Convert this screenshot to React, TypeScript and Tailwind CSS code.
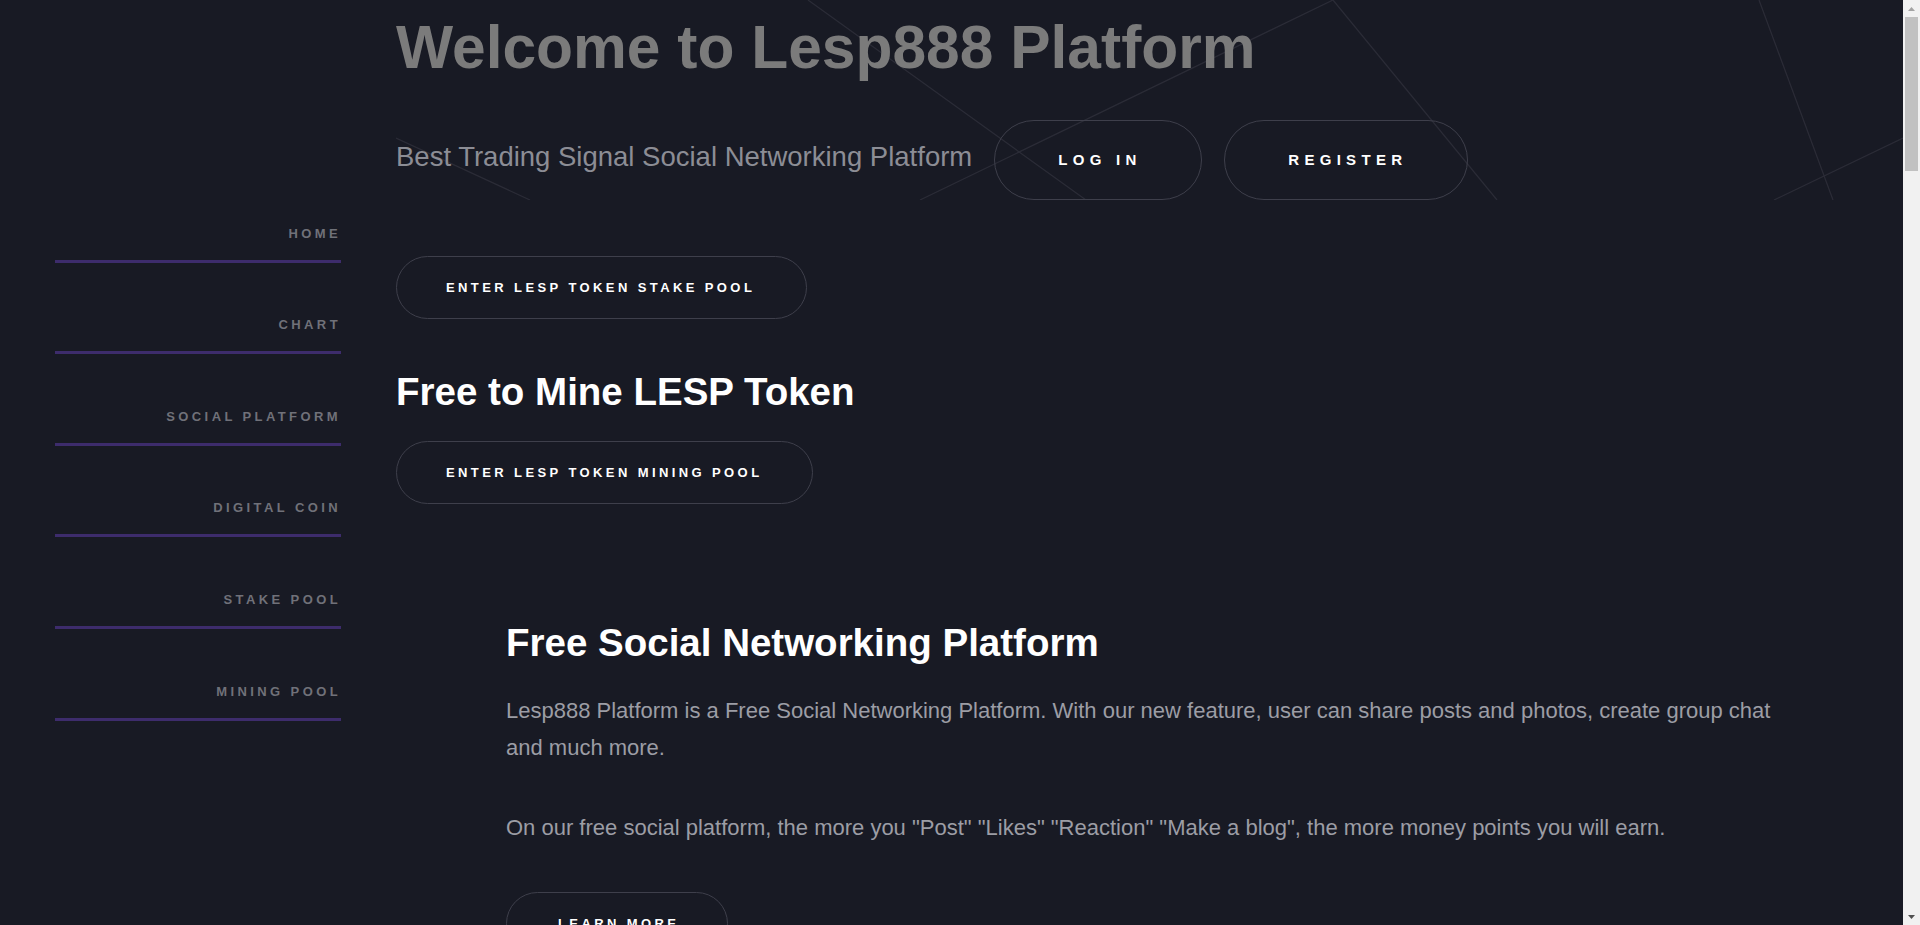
import React from "react";

const navItems = ["HOME", "CHART", "SOCIAL PLATFORM", "DIGITAL COIN", "STAKE POOL", "MINING POOL"];

function HeaderLines() {
  return (
    <svg
      className="pointer-events-none absolute left-0 top-0"
      width="1507"
      height="200"
      viewBox="0 0 1507 200"
    >
      <g stroke="#2b2c37" strokeWidth="1.2" fill="none">
        <line x1="0" y1="138" x2="134" y2="200" />
        <line x1="412" y1="0" x2="690" y2="200" />
        <line x1="524" y1="200" x2="937" y2="0" />
        <line x1="937" y1="0" x2="1101" y2="200" />
        <line x1="1363" y1="0" x2="1437" y2="200" />
        <line x1="1378" y1="200" x2="1507" y2="138" />
      </g>
    </svg>
  );
}

function FakeScrollbar() {
  return (
    <div className="fixed right-0 top-0 flex h-screen w-[17px] flex-col bg-[#f1f1f1]">
      <div className="flex h-[17px] items-center justify-center">
        <svg width="9" height="6" viewBox="0 0 9 6">
          <polygon points="4.5,1 8,5 1,5" fill="#a3a3a3" />
        </svg>
      </div>
      <div className="mx-[2px] h-[154px] bg-[#c1c1c1]" />
      <div className="flex-1" />
      <div className="flex h-[17px] items-center justify-center">
        <svg width="9" height="6" viewBox="0 0 9 6">
          <polygon points="1,1 8,1 4.5,5" fill="#505050" />
        </svg>
      </div>
    </div>
  );
}

export default function App() {
  return (
    <div className="min-h-[1400px] w-full bg-[#181a24] pr-[17px] font-['Liberation_Sans',Arial,sans-serif]">
      <div className="flex">
        {/* Sidebar */}
        <aside className="w-[396px] shrink-0 px-[55px] pt-[171px]">
          <ul className="flex flex-col">
            {navItems.map((item) => (
              <li
                key={item}
                className="flex h-[91.6px] items-end justify-end border-b-[3px] border-[#3d2c6c] pb-[16px]"
              >
                <span className="text-[13px] font-bold leading-[20px] tracking-[3.4px] text-[#707179]">
                  {item}
                </span>
              </li>
            ))}
          </ul>
        </aside>

        {/* Main */}
        <main className="min-w-0 flex-1">
          <header className="relative h-[200px] overflow-hidden">
            <HeaderLines />
            <div className="relative">
              <h1 className="pt-[11px] text-[60.5px] font-bold leading-[72px] text-[#7b7b7b]">
                Welcome to Lesp888 Platform
              </h1>
              <div className="mt-[37px] flex items-center gap-[22px]">
                <p className="mb-[8px] text-[27.5px] leading-[31px] text-[#8c8d95]">
                  Best Trading Signal Social Networking Platform
                </p>
                <button className="flex h-[80px] w-[208px] shrink-0 items-center rounded-full border border-[#3e3f4b] pl-[63px] text-[15px] font-bold tracking-[5.3px] text-white">
                  LOG IN
                </button>
                <button className="flex h-[80px] w-[244px] shrink-0 items-center rounded-full border border-[#3e3f4b] pl-[63px] text-[15px] font-bold tracking-[5.3px] text-white">
                  REGISTER
                </button>
              </div>
            </div>
          </header>

          <div className="mt-[56px] flex flex-col items-start">
            <button className="flex h-[63px] w-[411px] items-center rounded-full border border-[#3e3f4b] pl-[49px] text-[13px] font-bold tracking-[3.4px] text-white">
              ENTER LESP TOKEN STAKE POOL
            </button>
            <h2 className="mt-[50.4px] text-[38.5px] font-bold leading-[45.6px] text-white">
              Free to Mine LESP Token
            </h2>
            <button className="mt-[26px] flex h-[63px] w-[417px] items-center rounded-full border border-[#3e3f4b] pl-[49px] text-[13px] font-bold tracking-[3.4px] text-white">
              ENTER LESP TOKEN MINING POOL
            </button>
          </div>

          <section className="mt-[116px] w-[1390px] pl-[110px]">
            <h3 className="text-[38.5px] font-bold leading-[45.6px] text-white">
              Free Social Networking Platform
            </h3>
            <p className="mt-[26px] text-[22px] leading-[37px] text-[#9c9da5]">
              Lesp888 Platform is a Free Social Networking Platform. With our new feature, user can share posts and photos, create group chat and much more.
            </p>
            <p className="mt-[43.6px] text-[22px] leading-[37px] text-[#9c9da5]">
              On our free social platform, the more you "Post" "Likes" "Reaction" "Make a blog", the more money points you will earn.
            </p>
            <button className="mt-[46px] flex h-[63px] w-[222px] items-center rounded-full border border-[#3e3f4b] pl-[51px] text-[13px] font-bold tracking-[3.4px] text-white">
              LEARN MORE
            </button>
          </section>
        </main>
      </div>
      <FakeScrollbar />
    </div>
  );
}
